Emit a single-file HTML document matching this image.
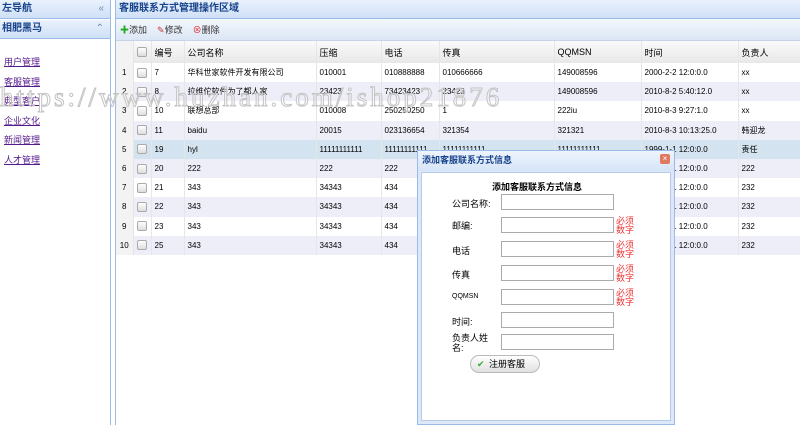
<!DOCTYPE html>
<html><head><meta charset="utf-8"><style>
*{margin:0;padding:0;box-sizing:border-box}
body{width:800px;height:425px;overflow:hidden;background:#fff;font-family:"Liberation Sans","Noto Sans CJK SC",sans-serif;font-size:9px;color:#000;position:relative}
.side{position:absolute;left:0;top:0;width:111px;height:425px;border-right:1px solid #99bbe8;background:#fff}
.hd{height:19px;background:linear-gradient(#eaf2fd,#cfe0f6);border-bottom:1px solid #99bbe8;color:#15428b;font-weight:bold;font-size:10px;line-height:18px;padding-left:2px;position:relative}
.hd span{position:absolute;right:6px;top:0;color:#6b8ec0;font-weight:normal}
.links{padding-top:16px;padding-left:4px}
.links a{display:block;color:#551a8b;text-decoration:underline;font-size:9px;height:19.5px;line-height:14px}
.main{position:absolute;left:115px;top:0;width:685px;height:425px;background:#fff;border-left:1px solid #99bbe8}
.tb{height:22px;background:linear-gradient(#f4f8fd,#dbe6f5);border-bottom:1px solid #c6d4e8;font-size:9px;line-height:22px;padding-left:4px;color:#333}
.tb b{font-weight:normal;margin-right:10px}
table{border-collapse:collapse;width:685px;position:absolute;top:41px;left:0}
td{height:19.2px;font-size:8px;border-right:1px solid #e6e6e6;padding-left:3px;white-space:nowrap;overflow:hidden}
tr.h td{height:22px;background:linear-gradient(#fafafa,#e8e8e8);font-size:9px}
tr.a td{background:#fff}tr.b td{background:#eeeef9}tr.s td{background:#d3e3f0}
td.n{background:#f3f3f3!important;text-align:center;padding:0}
.cb{display:inline-block;width:10px;height:10px;border:1px solid #aaa;border-radius:2px;background:linear-gradient(#fff,#ddd);vertical-align:middle}
.dlg{position:absolute;left:417px;top:150px;width:258px;height:275px;background:#dce8f8;border:1px solid #99bbe8}
.dt{height:20px;line-height:18px;color:#15428b;font-weight:bold;font-size:9px;padding-left:4px;background:linear-gradient(#eef4fc,#d6e4f7)}
.x{position:absolute;right:4px;top:3px;width:10px;height:10px;background:#e07a5f;border-radius:2px;color:#fff;font-size:8px;line-height:10px;text-align:center}
.db{position:absolute;left:3px;top:21px;right:3px;bottom:3px;background:#fff;border:1px solid #b7cbe6}
.lab{position:absolute;left:30px;font-size:9px}
.inp{position:absolute;left:79px;width:113px;height:16px;border:1px solid #aaa;background:#fff}
.req{position:absolute;left:194px;color:#e33;font-size:9px;width:22px;line-height:9px}
.btn{position:absolute;left:48px;top:182px;width:70px;height:18px;border:1px solid #bbb;border-radius:9px;background:linear-gradient(#fff,#e0e0e0);font-size:9px;line-height:16px;padding-left:18px}
.wm{position:absolute;left:0;top:82px;font-family:"Liberation Serif",serif;font-size:27px;color:rgba(255,255,255,.3);-webkit-text-stroke:1px #c4c4c4;letter-spacing:3px;white-space:nowrap}
</style></head><body>
<div class="side">
<div class="hd">左导航<span>«</span></div>
<div class="hd" style="margin-top:1px">相肥黑马<span>⌃</span></div>
<div class="links"><a>用户管理</a><a>客服管理</a><a>典型客户</a><a>企业文化</a><a>新闻管理</a><a>人才管理</a></div>
</div>
<div class="main">
<div class="hd" style="padding-left:3px">客服联系方式管理操作区域</div>
<div class="tb"><b><span style="color:#2a2">✚</span>添加</b><b><span style="color:#c33">✎</span>修改</b><b><span style="color:#d22">⊗</span>删除</b></div>
<table>
<tr class="h"><td class="n" style="width:17px"></td><td style="width:18px"><span class="cb"></span></td><td style="width:33px">编号</td><td style="width:132px">公司名称</td><td style="width:65px">压缩</td><td style="width:58px">电话</td><td style="width:115px">传真</td><td style="width:87px">QQMSN</td><td style="width:97px">时间</td><td>负责人</td></tr>
<tr class="a"><td class="n">1</td><td><span class="cb"></span></td><td>7</td><td>华科世家软件开发有限公司</td><td>010001</td><td>010888888</td><td>010666666</td><td>149008596</td><td>2000-2-2 12:0:0.0</td><td>xx</td></tr>
<tr class="b"><td class="n">2</td><td><span class="cb"></span></td><td>8</td><td>拉维佗软件为了都人家</td><td>23423</td><td>73423423</td><td>23423</td><td>149008596</td><td>2010-8-2 5:40:12.0</td><td>xx</td></tr>
<tr class="a"><td class="n">3</td><td><span class="cb"></span></td><td>10</td><td>联想总部</td><td>010008</td><td>250250250</td><td>1</td><td>222iu</td><td>2010-8-3 9:27:1.0</td><td>xx</td></tr>
<tr class="b"><td class="n">4</td><td><span class="cb"></span></td><td>11</td><td>baidu</td><td>20015</td><td>023136654</td><td>321354</td><td>321321</td><td>2010-8-3 10:13:25.0</td><td>韩迎龙</td></tr>
<tr class="s"><td class="n">5</td><td><span class="cb"></span></td><td>19</td><td>hyl</td><td>11111111111</td><td>11111111111</td><td>11111111111</td><td>11111111111</td><td>1999-1-1 12:0:0.0</td><td>责任</td></tr>
<tr class="b"><td class="n">6</td><td><span class="cb"></span></td><td>20</td><td>222</td><td>222</td><td>222</td><td>222</td><td>222</td><td>2010-1-1 12:0:0.0</td><td>222</td></tr>
<tr class="a"><td class="n">7</td><td><span class="cb"></span></td><td>21</td><td>343</td><td>34343</td><td>434</td><td>434</td><td>434</td><td>2010-1-1 12:0:0.0</td><td>232</td></tr>
<tr class="b"><td class="n">8</td><td><span class="cb"></span></td><td>22</td><td>343</td><td>34343</td><td>434</td><td>434</td><td>434</td><td>2010-1-1 12:0:0.0</td><td>232</td></tr>
<tr class="a"><td class="n">9</td><td><span class="cb"></span></td><td>23</td><td>343</td><td>34343</td><td>434</td><td>434</td><td>434</td><td>2010-1-1 12:0:0.0</td><td>232</td></tr>
<tr class="b"><td class="n">10</td><td><span class="cb"></span></td><td>25</td><td>343</td><td>34343</td><td>434</td><td>434</td><td>434</td><td>2010-1-1 12:0:0.0</td><td>232</td></tr>
</table>
</div>
<div class="wm">https://www.huzhan.com/ishop21876</div>
<div class="dlg">
<div class="dt">添加客服联系方式信息</div><div class="x">×</div>
<div class="db">
<div style="position:absolute;left:70px;top:7px;font-weight:bold;font-size:9px">添加客服联系方式信息</div>
<div class="lab" style="top:24px">公司名称:</div><div class="inp" style="top:21px"></div>
<div class="lab" style="top:46px">邮编:</div><div class="inp" style="top:44px"></div><div class="req" style="top:44px">必须数字</div>
<div class="lab" style="top:71px">电话</div><div class="inp" style="top:68px"></div><div class="req" style="top:68px">必须数字</div>
<div class="lab" style="top:95px">传真</div><div class="inp" style="top:92px"></div><div class="req" style="top:92px">必须数字</div>
<div class="lab" style="top:120px;font-size:7px">QQMSN</div><div class="inp" style="top:116px"></div><div class="req" style="top:116px">必须数字</div>
<div class="lab" style="top:142px">时间:</div><div class="inp" style="top:139px"></div>
<div class="lab" style="top:160px;line-height:10px">负责人姓<br>名:</div><div class="inp" style="top:161px"></div>
<div class="btn"><span style="color:#3a3;position:absolute;left:6px">✔</span>注册客服</div>
</div></div>
</body></html>
